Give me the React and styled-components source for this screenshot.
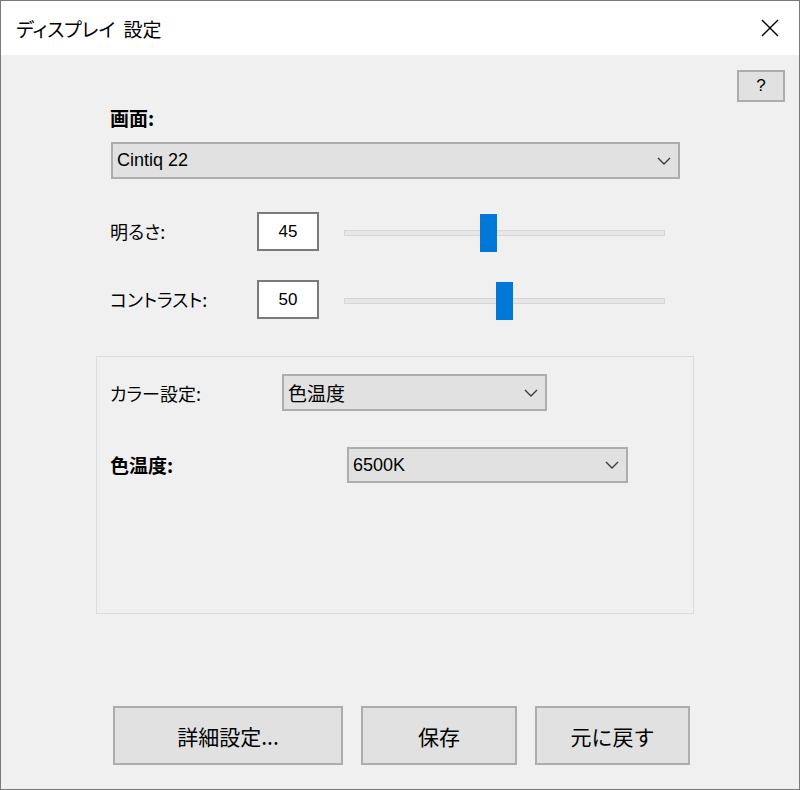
import styled, { createGlobalStyle } from "styled-components";

const GlobalStyle = createGlobalStyle`
  html, body {
    margin: 0;
    padding: 0;
    background: #f0f0f0;
  }
  * {
    box-sizing: border-box;
  }
`;

const font = `"Liberation Sans", "Noto Sans CJK JP", sans-serif`;
const jpFont = `"Noto Sans CJK JP", sans-serif`;

// whole dialog frame
const Window = styled.div`
  width: 800px;
  height: 790px;
  border: 1px solid #7a7a7a;
  display: flex;
  flex-direction: column;
  font-family: ${font};
  color: #000;
  background: #f0f0f0;
`;

const TitleBar = styled.div`
  height: 54px;
  background: #fff;
  display: flex;
  align-items: center;
  justify-content: space-between;
  padding: 0 20px 0 15px;
`;

const Title = styled.span`
  font-family: ${jpFont};
  font-size: 19px;
  font-feature-settings: "palt";
  word-spacing: 4px;
`;

const CloseButton = styled.button`
  border: none;
  background: none;
  padding: 0;
  width: 18px;
  height: 18px;
  display: flex;
`;

const Body = styled.div`
  flex: 1;
  padding: 15px 0 0 95px;
  display: flex;
  flex-direction: column;
`;

const HelpRow = styled.div`
  display: flex;
  justify-content: flex-end;
  padding-right: 14px;
`;

const HelpButton = styled.button`
  width: 48px;
  height: 32px;
  background: #e1e1e1;
  border: 2px solid #adadad;
  font-family: ${font};
  font-size: 17px;
  color: #000;
  padding: 0;
`;

const TopSection = styled.div`
  padding-left: 14px;
  display: flex;
  flex-direction: column;
`;

const Label = styled.span`
  font-family: ${jpFont};
  font-size: ${(p) => (p.$bold ? "19px" : "18px")};
  font-weight: ${(p) => (p.$bold ? 700 : 400)};
  font-feature-settings: "palt";
  line-height: 24px;
  width: ${(p) => (p.$width ? `${p.$width}px` : "auto")};
  flex-shrink: 0;
`;

const ScreenLabel = styled(Label)`
  margin-top: 4px;
`;

const Combo = styled.div`
  width: ${(p) => p.$width}px;
  height: ${(p) => p.$height || 37}px;
  margin-top: ${(p) => p.$top || 0}px;
  margin-left: ${(p) => p.$left || 0}px;
  background: #e1e1e1;
  border: 2px solid #adadad;
  display: flex;
  align-items: center;
  justify-content: space-between;
  padding: 0 7px 0 4px;
  font-size: ${(p) => p.$size || 18}px;
  flex-shrink: 0;
`;

const ComboJp = styled.span`
  font-family: ${jpFont};
`;

const SliderRow = styled.div`
  display: flex;
  align-items: flex-start;
  margin-top: ${(p) => p.$top}px;
  height: 39px;
`;

const RowLabel = styled(Label)`
  line-height: 39px;
`;

const NumberBox = styled.div`
  width: 62px;
  height: 39px;
  background: #fff;
  border: 2px solid #7a7a7a;
  display: flex;
  align-items: center;
  justify-content: center;
  font-size: 17px;
`;

const Slider = styled.div`
  position: relative;
  width: 321px;
  height: 38px;
  margin: 2px 0 0 25px;
  display: flex;
  align-items: center;
`;

const Track = styled.div`
  width: 100%;
  height: 6px;
  background: #e7e7e7;
  border: 1px solid #d6d6d6;
`;

const Thumb = styled.div`
  position: absolute;
  top: 0;
  width: 17px;
  height: 38px;
  background: #0078d7;
`;

const GroupBox = styled.div`
  margin-top: 37px;
  width: 598px;
  height: 258px;
  border: 1px solid #dcdcdc;
  padding: 17px 0 0 13px;
  display: flex;
  flex-direction: column;
`;

const GroupRow = styled.div`
  display: flex;
  align-items: center;
  margin-top: ${(p) => p.$top || 0}px;
`;

const ButtonRow = styled.div`
  display: flex;
  gap: 18px;
  margin: 92px 0 0 17px;
`;

const ActionButton = styled.button`
  width: ${(p) => p.$width}px;
  height: 59px;
  background: #e1e1e1;
  border: 2px solid #adadad;
  font-family: ${jpFont};
  font-size: 21px;
  color: #000;
  padding: 0;
`;

function Chevron() {
  return (
    <svg width="14" height="8" viewBox="0 0 14 8">
      <path d="M1 1 L7 7 L13 1" fill="none" stroke="#3c3c3c" strokeWidth="1.4" />
    </svg>
  );
}

function SliderControl({ value }) {
  return (
    <Slider>
      <Track />
      <Thumb style={{ left: `calc(${value}% - 8.5px)` }} />
    </Slider>
  );
}

export default function App() {
  return (
    <>
      <GlobalStyle />
      <Window>
        <TitleBar>
          <Title>ディスプレイ 設定</Title>
          <CloseButton aria-label="close">
            <svg width="18" height="18" viewBox="0 0 18 18">
              <path d="M1 1 L17 17 M17 1 L1 17" stroke="#000" strokeWidth="1.4" />
            </svg>
          </CloseButton>
        </TitleBar>
        <Body>
          <HelpRow>
            <HelpButton>?</HelpButton>
          </HelpRow>
          <TopSection>
            <ScreenLabel $bold>画面:</ScreenLabel>
            <Combo $width={569} $top={12} $left={1}>
              <span>Cintiq 22</span>
              <Chevron />
            </Combo>
            <SliderRow $top={33}>
              <RowLabel $width={147}>明るさ:</RowLabel>
              <NumberBox>45</NumberBox>
              <SliderControl value={45} />
            </SliderRow>
            <SliderRow $top={29}>
              <RowLabel $width={147}>コントラスト:</RowLabel>
              <NumberBox>50</NumberBox>
              <SliderControl value={50} />
            </SliderRow>
          </TopSection>
          <GroupBox>
            <GroupRow>
              <Label $width={172}>カラー設定:</Label>
              <Combo $width={265} $size={19}>
                <ComboJp>色温度</ComboJp>
                <Chevron />
              </Combo>
            </GroupRow>
            <GroupRow $top={36}>
              <Label $bold $width={237}>色温度:</Label>
              <Combo $width={281} $height={36}>
                <span>6500K</span>
                <Chevron />
              </Combo>
            </GroupRow>
          </GroupBox>
          <ButtonRow>
            <ActionButton $width={230}>詳細設定...</ActionButton>
            <ActionButton $width={156}>保存</ActionButton>
            <ActionButton $width={155}>元に戻す</ActionButton>
          </ButtonRow>
        </Body>
      </Window>
    </>
  );
}
